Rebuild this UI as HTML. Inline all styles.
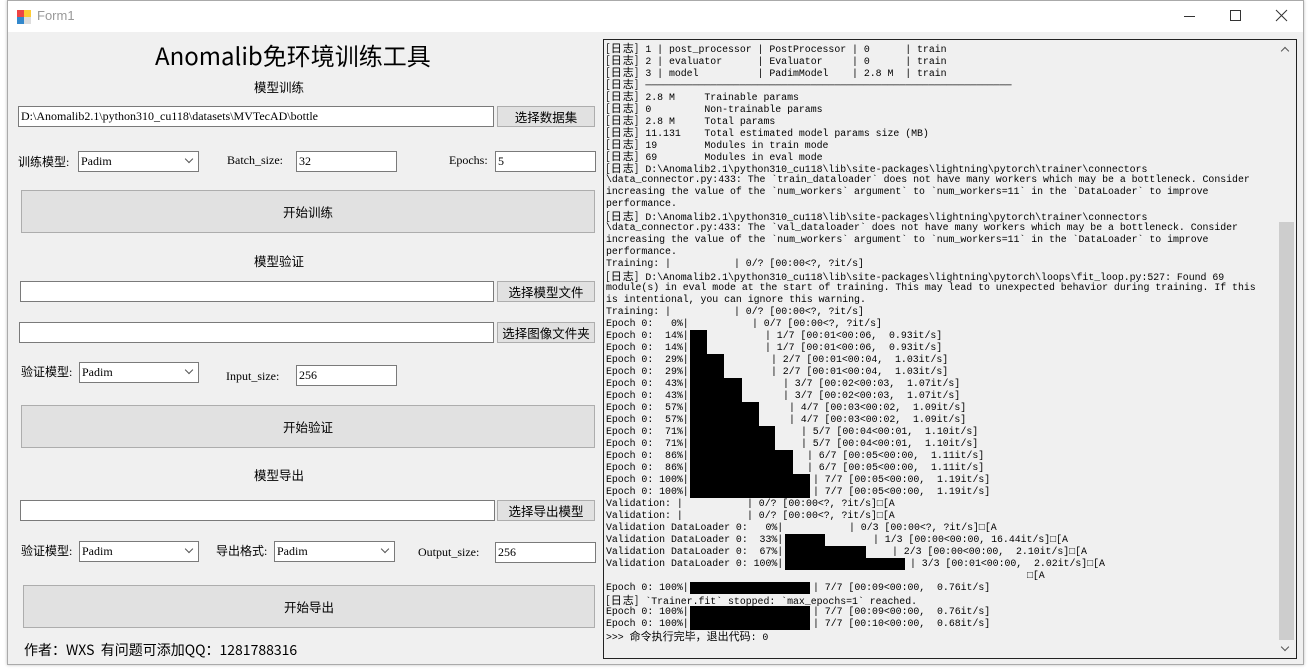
<!DOCTYPE html>
<html><head><meta charset="utf-8"><style>
*{margin:0;padding:0;box-sizing:border-box}
body{width:1312px;height:672px;background:#fff;position:relative;overflow:hidden;font-family:"Liberation Sans","Noto Sans CJK SC",sans-serif;font-size:12px;color:#000}
.win{position:absolute;left:7px;top:0;width:1297px;height:665px;border:1px solid #aaa;background:#f0f0f0;box-shadow:0 0 3px rgba(0,0,0,.25)}
.tb{position:absolute;left:0;top:0;width:100%;height:31px;background:#fff}
.a{position:absolute;white-space:pre}
.tx{position:absolute;background:#fff;border:1px solid #7a7a7a;font-family:"Liberation Serif","Noto Serif CJK SC",serif;font-size:12px;line-height:18px;padding-left:2px}
.bt{position:absolute;background:#e1e1e1;border:1px solid #adadad;text-align:center;font-family:"Noto Sans CJK SC",sans-serif;font-size:12.5px}
.cb{position:absolute;background:#fff;border:1px solid #7a7a7a;font-family:"Liberation Serif",serif;font-size:12px;line-height:18px;padding-left:2px}
.cb:after{content:"";position:absolute;right:6px;top:4px;width:5px;height:5px;border-right:1px solid #555;border-bottom:1px solid #555;transform:rotate(45deg)}
.lb{position:absolute;font-family:"Liberation Serif","Noto Serif CJK SC",serif;font-size:12px;white-space:pre}
.cj{font-family:"Noto Sans CJK SC",sans-serif}
.log{position:absolute;left:603px;top:39px;width:694px;height:620px;border:1px solid #222;background:#f0f0f0;overflow:hidden;font-family:"Liberation Mono","Noto Sans CJK SC",monospace;font-size:9.9px}
.l{position:absolute;left:2px;height:12px;line-height:12px;white-space:pre;letter-spacing:-0.02px}
.r{position:absolute;top:0;height:12px;line-height:12px;white-space:pre}
.k{position:absolute;top:0;height:12px;background:#000}
.z{font-family:"Noto Sans CJK SC",sans-serif;font-size:11px;letter-spacing:1px}
.sb{position:absolute;left:1278px;top:40px;width:17px;height:618px;background:#f0f0f0}
</style></head><body>
<div class="win">
 <div class="tb">
  <svg style="position:absolute;left:8px;top:8px" width="16" height="16" viewBox="0 0 16 16"><rect x="1" y="1" width="7" height="7" fill="#e44"/><rect x="8" y="1" width="7" height="7" fill="#fc3"/><rect x="1" y="8" width="7" height="7" fill="#38c"/><rect x="8" y="8" width="7" height="7" fill="#ddd"/></svg>
  <div class="a" style="left:29px;top:7px;font-size:13px;color:#999">Form1</div>
  <div class="a" style="left:1176px;top:15px;width:11px;height:1px;background:#333"></div>
  <div class="a" style="left:1222px;top:9px;width:11px;height:11px;border:1px solid #333"></div>
  <svg style="position:absolute;left:1267px;top:8px" width="13" height="13"><path d="M1 1L12 12M12 1L1 12" stroke="#333" stroke-width="1"/></svg>
 </div>
</div>
<div class="a cj" style="left:155px;top:37px;font-size:24px">Anomalib免环境训练工具</div>
<div class="a cj" style="left:254px;top:77px;font-size:12.5px">模型训练</div>
<div class="tx" style="left:18px;top:106px;width:476px;height:21px">D:\Anomalib2.1\python310_cu118\datasets\MVTecAD\bottle</div>
<div class="bt" style="left:497px;top:106px;width:98px;height:21px;line-height:19px">选择数据集</div>
<div class="lb" style="left:18px;top:153px"><span class="cj">训练模型</span>:</div>
<div class="cb" style="left:78px;top:151px;width:121px;height:21px">Padim</div>
<div class="lb" style="left:227px;top:153px">Batch_size:</div>
<div class="tx" style="left:296px;top:151px;width:101px;height:21px">32</div>
<div class="lb" style="left:449px;top:153px">Epochs:</div>
<div class="tx" style="left:495px;top:151px;width:101px;height:21px">5</div>
<div class="bt" style="left:21px;top:190px;width:574px;height:43px;line-height:41px">开始训练</div>
<div class="a cj" style="left:254px;top:251px;font-size:12.5px">模型验证</div>
<div class="tx" style="left:20px;top:281px;width:474px;height:21px"></div>
<div class="bt" style="left:497px;top:281px;width:98px;height:21px;line-height:19px">选择模型文件</div>
<div class="tx" style="left:19px;top:322px;width:475px;height:21px"></div>
<div class="bt" style="left:497px;top:322px;width:98px;height:21px;line-height:19px">选择图像文件夹</div>
<div class="lb" style="left:21px;top:363px"><span class="cj">验证模型</span>:</div>
<div class="cb" style="left:79px;top:362px;width:120px;height:21px">Padim</div>
<div class="lb" style="left:226px;top:369px">Input_size:</div>
<div class="tx" style="left:296px;top:365px;width:101px;height:21px">256</div>
<div class="bt" style="left:21px;top:405px;width:574px;height:43px;line-height:41px">开始验证</div>
<div class="a cj" style="left:254px;top:465px;font-size:12.5px">模型导出</div>
<div class="tx" style="left:20px;top:500px;width:475px;height:21px"></div>
<div class="bt" style="left:497px;top:500px;width:98px;height:21px;line-height:19px">选择导出模型</div>
<div class="lb" style="left:21px;top:542px"><span class="cj">验证模型</span>:</div>
<div class="cb" style="left:79px;top:541px;width:120px;height:21px">Padim</div>
<div class="lb" style="left:216px;top:542px"><span class="cj">导出格式</span>:</div>
<div class="cb" style="left:274px;top:541px;width:121px;height:21px">Padim</div>
<div class="lb" style="left:418px;top:545px">Output_size:</div>
<div class="tx" style="left:495px;top:542px;width:101px;height:21px">256</div>
<div class="bt" style="left:23px;top:585px;width:572px;height:43px;line-height:41px">开始导出</div>
<div class="a cj" style="left:24px;top:640px;font-size:14px">作者：WXS &nbsp;有问题可添加QQ：1281788316</div>

<div class="log">
<div class="l" style="top:2px"><span class="z">[日志]</span> 1 | post_processor | PostProcessor | 0      | train</div>
<div class="l" style="top:14px"><span class="z">[日志]</span> 2 | evaluator      | Evaluator     | 0      | train</div>
<div class="l" style="top:26px"><span class="z">[日志]</span> 3 | model          | PadimModel    | 2.8 M  | train</div>
<div class="l" style="top:38px"><span class="z">[日志]</span> ──────────────────────────────────────────────────────────────</div>
<div class="l" style="top:50px"><span class="z">[日志]</span> 2.8 M     Trainable params</div>
<div class="l" style="top:62px"><span class="z">[日志]</span> 0         Non-trainable params</div>
<div class="l" style="top:74px"><span class="z">[日志]</span> 2.8 M     Total params</div>
<div class="l" style="top:86px"><span class="z">[日志]</span> 11.131    Total estimated model params size (MB)</div>
<div class="l" style="top:98px"><span class="z">[日志]</span> 19        Modules in train mode</div>
<div class="l" style="top:110px"><span class="z">[日志]</span> 69        Modules in eval mode</div>
<div class="l" style="top:122px"><span class="z">[日志]</span> D:\Anomalib2.1\python310_cu118\lib\site-packages\lightning\pytorch\trainer\connectors</div>
<div class="l" style="top:134px">\data_connector.py:433: The `train_dataloader` does not have many workers which may be a bottleneck. Consider</div>
<div class="l" style="top:146px">increasing the value of the `num_workers` argument` to `num_workers=11` in the `DataLoader` to improve</div>
<div class="l" style="top:158px">performance.</div>
<div class="l" style="top:170px"><span class="z">[日志]</span> D:\Anomalib2.1\python310_cu118\lib\site-packages\lightning\pytorch\trainer\connectors</div>
<div class="l" style="top:182px">\data_connector.py:433: The `val_dataloader` does not have many workers which may be a bottleneck. Consider</div>
<div class="l" style="top:194px">increasing the value of the `num_workers` argument` to `num_workers=11` in the `DataLoader` to improve</div>
<div class="l" style="top:206px">performance.</div>
<div class="l" style="top:218px">Training: |<span class="r" style="left:128px">| 0/? [00:00&lt;?, ?it/s]</span></div>
<div class="l" style="top:230px"><span class="z">[日志]</span> D:\Anomalib2.1\python310_cu118\lib\site-packages\lightning\pytorch\loops\fit_loop.py:527: Found 69</div>
<div class="l" style="top:242px">module(s) in eval mode at the start of training. This may lead to unexpected behavior during training. If this</div>
<div class="l" style="top:254px">is intentional, you can ignore this warning.</div>
<div class="l" style="top:266px">Training: |<span class="r" style="left:128px">| 0/? [00:00&lt;?, ?it/s]</span></div>
<div class="l" style="top:278px">Epoch 0:   0%|<span class="r" style="left:146px">| 0/7 [00:00&lt;?, ?it/s]</span></div>
<div class="l" style="top:290px">Epoch 0:  14%|<span class="k" style="left:84px;width:17px"></span><span class="r" style="left:159px">| 1/7 [00:01&lt;00:06,  0.93it/s]</span></div>
<div class="l" style="top:302px">Epoch 0:  14%|<span class="k" style="left:84px;width:17px"></span><span class="r" style="left:159px">| 1/7 [00:01&lt;00:06,  0.93it/s]</span></div>
<div class="l" style="top:314px">Epoch 0:  29%|<span class="k" style="left:84px;width:34px"></span><span class="r" style="left:165px">| 2/7 [00:01&lt;00:04,  1.03it/s]</span></div>
<div class="l" style="top:326px">Epoch 0:  29%|<span class="k" style="left:84px;width:34px"></span><span class="r" style="left:165px">| 2/7 [00:01&lt;00:04,  1.03it/s]</span></div>
<div class="l" style="top:338px">Epoch 0:  43%|<span class="k" style="left:84px;width:52px"></span><span class="r" style="left:177px">| 3/7 [00:02&lt;00:03,  1.07it/s]</span></div>
<div class="l" style="top:350px">Epoch 0:  43%|<span class="k" style="left:84px;width:52px"></span><span class="r" style="left:177px">| 3/7 [00:02&lt;00:03,  1.07it/s]</span></div>
<div class="l" style="top:362px">Epoch 0:  57%|<span class="k" style="left:84px;width:69px"></span><span class="r" style="left:183px">| 4/7 [00:03&lt;00:02,  1.09it/s]</span></div>
<div class="l" style="top:374px">Epoch 0:  57%|<span class="k" style="left:84px;width:69px"></span><span class="r" style="left:183px">| 4/7 [00:03&lt;00:02,  1.09it/s]</span></div>
<div class="l" style="top:386px">Epoch 0:  71%|<span class="k" style="left:84px;width:85px"></span><span class="r" style="left:195px">| 5/7 [00:04&lt;00:01,  1.10it/s]</span></div>
<div class="l" style="top:398px">Epoch 0:  71%|<span class="k" style="left:84px;width:85px"></span><span class="r" style="left:195px">| 5/7 [00:04&lt;00:01,  1.10it/s]</span></div>
<div class="l" style="top:410px">Epoch 0:  86%|<span class="k" style="left:84px;width:103px"></span><span class="r" style="left:201px">| 6/7 [00:05&lt;00:00,  1.11it/s]</span></div>
<div class="l" style="top:422px">Epoch 0:  86%|<span class="k" style="left:84px;width:103px"></span><span class="r" style="left:201px">| 6/7 [00:05&lt;00:00,  1.11it/s]</span></div>
<div class="l" style="top:434px">Epoch 0: 100%|<span class="k" style="left:84px;width:120px"></span><span class="r" style="left:207px">| 7/7 [00:05&lt;00:00,  1.19it/s]</span></div>
<div class="l" style="top:446px">Epoch 0: 100%|<span class="k" style="left:84px;width:120px"></span><span class="r" style="left:207px">| 7/7 [00:05&lt;00:00,  1.19it/s]</span></div>
<div class="l" style="top:458px">Validation: |<span class="r" style="left:141px">| 0/? [00:00&lt;?, ?it/s]□[A</span></div>
<div class="l" style="top:470px">Validation: |<span class="r" style="left:141px">| 0/? [00:00&lt;?, ?it/s]□[A</span></div>
<div class="l" style="top:482px">Validation DataLoader 0:   0%|<span class="r" style="left:243px">| 0/3 [00:00&lt;?, ?it/s]□[A</span></div>
<div class="l" style="top:494px">Validation DataLoader 0:  33%|<span class="k" style="left:179px;width:40px"></span><span class="r" style="left:267px">| 1/3 [00:00&lt;00:00, 16.44it/s]□[A</span></div>
<div class="l" style="top:506px">Validation DataLoader 0:  67%|<span class="k" style="left:179px;width:81px"></span><span class="r" style="left:286px">| 2/3 [00:00&lt;00:00,  2.10it/s]□[A</span></div>
<div class="l" style="top:518px">Validation DataLoader 0: 100%|<span class="k" style="left:179px;width:120px"></span><span class="r" style="left:304px">| 3/3 [00:01&lt;00:00,  2.02it/s]□[A</span></div>
<div class="l" style="top:530px"><span class="r" style="left:421px">□[A</span></div>
<div class="l" style="top:542px">Epoch 0: 100%|<span class="k" style="left:84px;width:120px"></span><span class="r" style="left:207px">| 7/7 [00:09&lt;00:00,  0.76it/s]</span></div>
<div class="l" style="top:554px"><span class="z">[日志]</span> `Trainer.fit` stopped: `max_epochs=1` reached.</div>
<div class="l" style="top:566px">Epoch 0: 100%|<span class="k" style="left:84px;width:120px"></span><span class="r" style="left:207px">| 7/7 [00:09&lt;00:00,  0.76it/s]</span></div>
<div class="l" style="top:578px">Epoch 0: 100%|<span class="k" style="left:84px;width:120px"></span><span class="r" style="left:207px">| 7/7 [00:10&lt;00:00,  0.68it/s]</span></div>
<div class="l" style="top:590px">&gt;&gt;&gt; <span class="z" style="letter-spacing:0">命令执行完毕，退出代码</span>: 0</div>
</div>
<div class="sb">
 <div style="position:absolute;left:4px;top:8px;width:6px;height:6px;border-left:1px solid #555;border-top:1px solid #555;transform:rotate(45deg)"></div>
 <div style="position:absolute;left:1px;top:182px;width:15px;height:418px;background:#cdcdcd"></div>
 <div style="position:absolute;left:4px;top:604px;width:6px;height:6px;border-right:1px solid #555;border-bottom:1px solid #555;transform:rotate(45deg)"></div>
</div>
</body></html>
